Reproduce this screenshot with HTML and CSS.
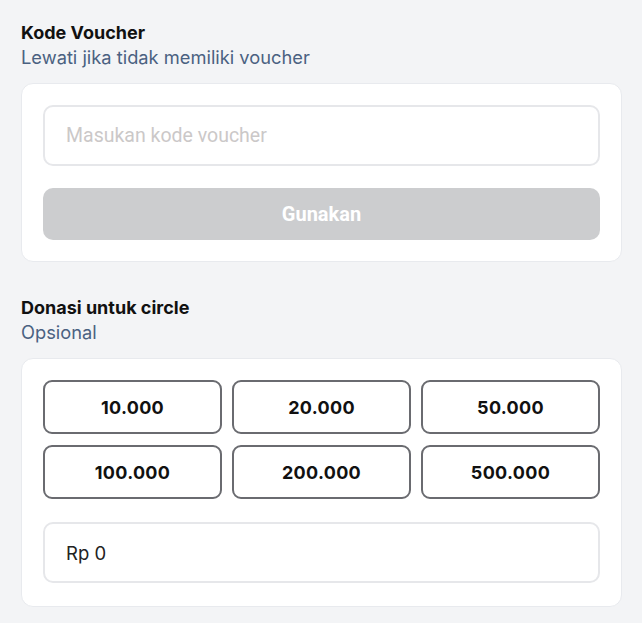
FILE: index.html
```html
<!DOCTYPE html>
<html lang="id">
<head>
    <meta charset="UTF-8">
    <meta name="viewport" content="width=device-width, initial-scale=1.0">
    <title>Checkout</title>
    <link rel="stylesheet" href="styles.css">
</head>
<body>
    <!-- Voucher -->
    <div class="section">
        <h3 class="section-title">Kode Voucher</h3>
        <p class="section-sub">Lewati jika tidak memiliki voucher</p>
        <div class="card">
            <input type="text" class="field voucher-input" placeholder="Masukan kode voucher">
            <button class="apply-btn" disabled>Gunakan</button>
        </div>
    </div>

    <!-- Donasi -->
    <div class="section donation">
        <h3 class="section-title">Donasi untuk circle</h3>
        <p class="section-sub">Opsional</p>
        <div class="card">
            <div class="amount-grid">
                <button class="amount">10.000</button>
                <button class="amount">20.000</button>
                <button class="amount">50.000</button>
                <button class="amount">100.000</button>
                <button class="amount">200.000</button>
                <button class="amount">500.000</button>
            </div>
            <input type="text" class="field amount-input" value="Rp 0">
        </div>
    </div>
</body>
</html>
```

FILE: styles.css
```css
body {
    margin: 0;
    padding: 20px 20px 0 21px;
    background-color: #f3f4f6;
    font-family: Inter, "Liberation Sans", sans-serif;
    color: #111;
}

.section {
    width: 601px;
}

.donation {
    margin-top: 33px;
}

.section-title {
    margin: 0;
    font-size: 18px;
    font-weight: 700;
    line-height: 25px;
}

.section-sub {
    margin: 0 0 13px;
    font-size: 18.3px;
    line-height: 25px;
    color: #4a6181;
}

.card {
    display: flex;
    flex-direction: column;
    gap: 22px;
    padding: 21px;
    background-color: #fff;
    border: 1px solid #e8eaee;
    border-radius: 12px;
}

.donation .card {
    gap: 23px;
    padding-bottom: 23px;
}

.field {
    box-sizing: border-box;
    width: 100%;
    height: 61px;
    padding: 0 21px;
    border: 2px solid #e6e7ea;
    border-radius: 10px;
    background: #fff;
    outline: none;
}

.voucher-input {
    font-family: Roboto, "Liberation Sans", sans-serif;
    font-size: 19.5px;
}

.voucher-input::placeholder {
    color: #cbc8c8;
}

.apply-btn {
    height: 52px;
    border: none;
    border-radius: 10px;
    background-color: #cccdcf;
    color: #fff;
    font-family: Roboto, "Liberation Sans", sans-serif;
    font-size: 20px;
    font-weight: 700;
}

.amount-grid {
    display: grid;
    grid-template-columns: repeat(3, 1fr);
    gap: 11px 10px;
}

.amount {
    height: 54px;
    border: 2px solid #6a6b70;
    border-radius: 9px;
    background: #fff;
    font-family: Inter, "Liberation Sans", sans-serif;
    font-size: 18px;
    font-weight: 700;
    letter-spacing: 0.3px;
    color: #111;
}

.amount-input {
    height: 61px;
    font-family: Inter, "Liberation Sans", sans-serif;
    font-size: 18.5px;
    color: #222;
}
```
